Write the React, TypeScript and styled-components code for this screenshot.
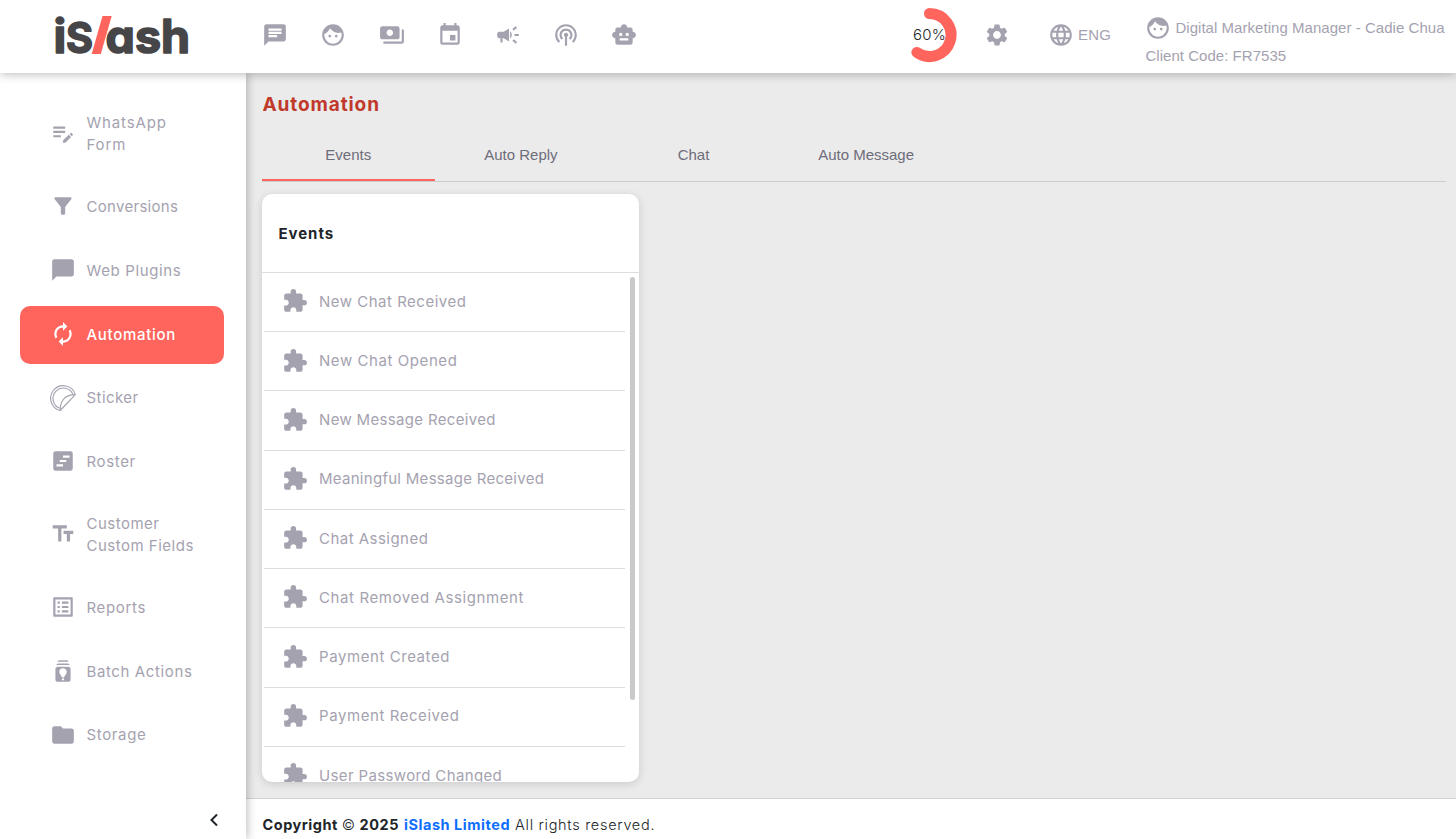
import React from "react";
import styled, { createGlobalStyle } from "styled-components";
import type { IconType } from "react-icons";
import {
  MdChat, MdFace, MdPayments, MdEvent, MdCampaign, MdPodcasts, MdSmartToy, MdSettings, MdLanguage,
  MdEditNote, MdFilterAlt, MdChatBubble, MdAutorenew, MdViewTimeline, MdTextFields, MdListAlt,
  MdBatchPrediction, MdFolder, MdExtension,
} from "react-icons/md";

const GREY = "#a5a2b0";
const CORAL = "#ff655d";
const ROUND = `Inter, "Open Sans", sans-serif`;
const ARIAL = `"Liberation Sans", Arial, sans-serif`;

const GlobalStyle = createGlobalStyle`
  *, *::before, *::after { box-sizing: border-box; }
  body { margin: 0; background: #fff; font-family: ${ROUND}; overflow: hidden; }
  svg { display: block; flex: none; }
`;

const Page = styled.div`
  display: flex;
  flex-direction: column;
  width: 100%;
  height: 839px;
  overflow: hidden;
`;

const Header = styled.header`
  display: flex;
  flex: none;
  height: 73px;
  background: #fff;
  box-shadow: 0 1px 10px rgba(0, 0, 0, 0.28);
  position: relative;
  z-index: 3;
  color: ${GREY};
  font-family: ${ARIAL};
`;

const Brand = styled.div`
  width: 246px;
  padding: 8px 0 0 48px;
`;

const TopNav = styled.nav`
  display: flex;
  align-items: center;
  height: 70px;
  gap: 32.2px;
  padding-left: 16.2px;
`;

const HeaderRight = styled.div`
  display: flex;
  margin-left: auto;
  height: 70px;
  align-items: center;
`;

const Gauge = styled.div`
  display: grid;
  place-items: center;
  width: 56px;
  height: 56px;
  margin-right: 26px;
  > * { grid-area: 1 / 1; }
`;

const GaugeLabel = styled.span`
  color: #212529;
  font: 300 15px ${ROUND};
  letter-spacing: 0.2px;
  padding: 0 1px 2px 0;
  z-index: 1;
`;

const Language = styled.div`
  display: flex;
  align-items: center;
  gap: 4px;
  margin-left: 38px;
  width: 97px;
  font-size: 15px;
  letter-spacing: 0.2px;
  > span { padding-bottom: 2px; }
`;

const Account = styled.div`
  align-self: flex-start;
  width: 311px;
  padding: 15px 0 0 0.4px;
  font-size: 15px;
  line-height: 26px;
  letter-spacing: 0.04px;
  white-space: nowrap;
`;

const AccountName = styled.div`
  display: flex;
  gap: 4px;
  height: 28px;
`;

const Body = styled.div`
  display: flex;
  flex: 1;
  min-height: 0;
`;

const Sidebar = styled.aside`
  display: flex;
  flex-direction: column;
  flex: none;
  width: 246px;
  padding: 23.2px 22px 0 20px;
  background: #fff;
  box-shadow: 1px 0 9px rgba(0, 0, 0, 0.28);
  position: relative;
  z-index: 2;
`;

const Menu = styled.nav`
  display: flex;
  flex-direction: column;
  gap: 5.8px;
`;

const MenuItem = styled.a<{ $active?: boolean }>`
  display: flex;
  align-items: center;
  gap: 10.9px;
  padding: 16px 0 16px 29.6px;
  border-radius: 10px;
  background: ${(p) => (p.$active ? CORAL : "transparent")};
  color: ${(p) => (p.$active ? "#fff" : GREY)};
  font-weight: ${(p) => (p.$active ? 500 : 400)};
  > svg { margin: -0.8px 0 0.8px; }
`;

const MenuLabel = styled.span<{ $track: number }>`
  font-size: 15px;
  line-height: 22px;
  letter-spacing: ${(p) => p.$track}px;
  white-space: pre-line;
`;

const Collapse = styled.div`
  display: flex;
  justify-content: flex-end;
  margin-top: auto;
  padding: 0 5px 12px 0;
`;

const Content = styled.div`
  display: flex;
  flex-direction: column;
  flex: 1;
  min-width: 0;
`;

const Main = styled.main`
  flex: 1;
  padding: 20px 10px 0 16px;
  background: #ebebeb;
`;

const Title = styled.h1`
  margin: 0;
  padding-left: 0.5px;
  color: #c0392b;
  font-size: 19px;
  line-height: 23px;
  font-weight: 700;
  letter-spacing: 0.9px;
`;

const Tabs = styled.div`
  display: flex;
  height: 53px;
  margin-top: 13px;
  border-bottom: 1px solid #cccdcf;
  font-family: ${ARIAL};
`;

const Tab = styled.div<{ $active?: boolean }>`
  width: 172.6px;
  padding-top: 16px;
  border-bottom: 2px solid ${(p) => (p.$active ? CORAL : "transparent")};
  color: #6e6d7a;
  font-size: 15px;
  line-height: 20px;
  text-align: center;
`;

const Card = styled.section`
  display: flex;
  flex-direction: column;
  width: 377px;
  height: 588px;
  margin-top: 12px;
  border-radius: 10px;
  background: #fff;
  box-shadow: 0 2px 8px rgba(0, 0, 0, 0.14);
  overflow: hidden;
`;

const CardTitle = styled.h2`
  flex: none;
  height: 79px;
  margin: 0;
  padding: 29px 16.5px 0;
  border-bottom: 1px solid #dedede;
  color: #212529;
  font-size: 15px;
  line-height: 22px;
  font-weight: 700;
  letter-spacing: 0.95px;
`;

const CardBody = styled.div`
  display: flex;
  flex: 1;
  min-height: 0;
  padding-left: 2px;
`;

const EventList = styled.div`
  width: 361px;
`;

const EventRow = styled.div`
  display: flex;
  align-items: center;
  gap: 11px;
  height: 59.22px;
  padding: 0 0 1.6px 18px;
  border-bottom: 1px solid #dedede;
  color: ${GREY};
`;

const EventName = styled.span<{ $track: number }>`
  font-size: 15px;
  letter-spacing: ${(p) => p.$track}px;
  white-space: nowrap;
`;

const ScrollThumb = styled.div`
  width: 5px;
  height: 423px;
  margin: 4px 0 0 5px;
  border-radius: 3px;
  background: #c9cacb;
`;

const Footer = styled.footer`
  display: flex;
  flex: none;
  gap: 5px;
  height: 41px;
  padding: 15px 0 0 16.5px;
  border-top: 1px solid #d2d2d2;
  background: #fff;
  color: #212529;
  font-size: 14.5px;
  line-height: 22px;
  white-space: pre;
`;

const FooterText = styled.span<{ $track: number; $bold?: boolean; $link?: boolean }>`
  font-weight: ${(p) => (p.$bold ? 700 : 300)};
  color: ${(p) => (p.$link ? "#0d6efd" : "inherit")};
  letter-spacing: ${(p) => p.$track}px;
`;

const Thin = styled.span`
  font-weight: 300;
`;

const LogoText = styled.text`
  font-family: ${ROUND};
  font-weight: 700;
  font-feature-settings: "cv11" 1;
  fill: #464648;
  stroke: #464648;
  stroke-width: 1.6;
  stroke-linejoin: round;
`;

function Logo() {
  return (
    <svg width="150" height="60" viewBox="48 8 150 60">
      <LogoText x="53.6" y="53.4" fontSize="47">i</LogoText>
      <LogoText x="66" y="53.4" fontSize="43" textLength="27" lengthAdjust="spacingAndGlyphs">S</LogoText>
      <LogoText x="105.6" y="53.4" fontSize="46" textLength="84.5" lengthAdjust="spacingAndGlyphs">ash</LogoText>
      <path d="M102.5 16H111.7L100.8 54H91.7Z" fill={CORAL} />
    </svg>
  );
}

function StickerIcon() {
  return (
    <svg width="26" height="26" viewBox="0 0 26 26" fill="none" stroke="currentColor" strokeWidth="1.15" strokeLinejoin="round">
      <path d="M25.3 9.6A12.6 12.6 0 1 0 10.2 25.5L25.3 9.6Z" />
      <path d="M23.1 9.9A10.4 10.4 0 1 0 9.7 23.2" />
      <path d="M25.3 9.6C16.3 9.6 10 14.5 10.2 25.5" />
    </svg>
  );
}

const topIcons: IconType[] = [MdChat, MdFace, MdPayments, MdEvent, MdCampaign, MdPodcasts, MdSmartToy];

interface MenuEntry {
  label: string;
  track: number;
  Icon: React.ComponentType<{ size?: number }>;
  active?: boolean;
}

const menu: MenuEntry[] = [
  { label: "WhatsApp\nForm", track: 0.85, Icon: MdEditNote },
  { label: "Conversions", track: 0.3, Icon: MdFilterAlt },
  { label: "Web Plugins", track: 0.63, Icon: MdChatBubble },
  { label: "Automation", track: 0.7, Icon: MdAutorenew, active: true },
  { label: "Sticker", track: 0.45, Icon: StickerIcon },
  { label: "Roster", track: 0.65, Icon: MdViewTimeline },
  { label: "Customer\nCustom Fields", track: 0.5, Icon: MdTextFields },
  { label: "Reports", track: 0.65, Icon: MdListAlt },
  { label: "Batch Actions", track: 0.62, Icon: MdBatchPrediction },
  { label: "Storage", track: 0.65, Icon: MdFolder },
];

const events: [string, number][] = [
  ["New Chat Received", 0.5],
  ["New Chat Opened", 0.57],
  ["New Message Received", 0.33],
  ["Meaningful Message Received", 0.28],
  ["Chat Assigned", 0.47],
  ["Chat Removed Assignment", 0.6],
  ["Payment Created", 0.57],
  ["Payment Received", 0.57],
  ["User Password Changed", 0.36],
];

export default function App() {
  return (
    <Page>
      <GlobalStyle />
      <Header>
        <Brand><Logo /></Brand>
        <TopNav>
          {topIcons.map((Icon, i) => <Icon key={i} size={26} />)}
        </TopNav>
        <HeaderRight>
          <Gauge>
            <svg width="56" height="56" viewBox="0 0 56 56">
              <path d="M27.5 6.5A21.5 21.5 0 1 1 14.86 45.4" fill="none" stroke={CORAL} strokeWidth="11" strokeLinecap="round" />
            </svg>
            <GaugeLabel>60%</GaugeLabel>
          </Gauge>
          <MdSettings size={26} />
          <Language><MdLanguage size={26} /><span>ENG</span></Language>
          <Account>
            <AccountName><MdFace size={26} />Digital Marketing Manager - Cadie Chua</AccountName>
            <div>Client Code: FR7535</div>
          </Account>
        </HeaderRight>
      </Header>
      <Body>
        <Sidebar>
          <Menu>
            {menu.map(({ label, track, Icon, active }) => (
              <MenuItem key={label} $active={active}>
                <Icon size={26} />
                <MenuLabel $track={track}>{label}</MenuLabel>
              </MenuItem>
            ))}
          </Menu>
          <Collapse>
            <svg width="10" height="14" viewBox="0 0 10 14" fill="none" stroke="#212529" strokeWidth="2">
              <path d="M8 1.5L2.5 7L8 12.5" />
            </svg>
          </Collapse>
        </Sidebar>
        <Content>
          <Main>
            <Title>Automation</Title>
            <Tabs>
              <Tab $active>Events</Tab>
              <Tab>Auto Reply</Tab>
              <Tab>Chat</Tab>
              <Tab>Auto Message</Tab>
            </Tabs>
            <Card>
              <CardTitle>Events</CardTitle>
              <CardBody>
                <EventList>
                  {events.map(([name, track]) => (
                    <EventRow key={name}>
                      <MdExtension size={26} />
                      <EventName $track={track}>{name}</EventName>
                    </EventRow>
                  ))}
                </EventList>
                <ScrollThumb />
              </CardBody>
            </Card>
          </Main>
          <Footer>
            <FooterText $bold $track={0.52}>Copyright <Thin>©</Thin> 2025</FooterText>
            <FooterText $bold $link $track={0.54}>iSlash Limited</FooterText>
            <FooterText $track={0.7}>All rights reserved.</FooterText>
          </Footer>
        </Content>
      </Body>
    </Page>
  );
}
